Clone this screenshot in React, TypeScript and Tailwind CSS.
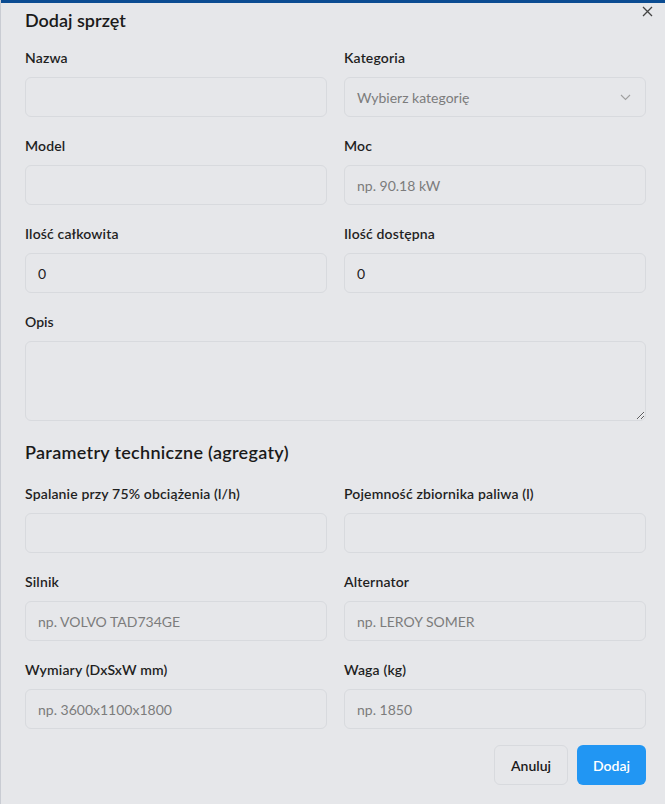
import React from "react";

const font = { fontFamily: 'Lato, "Noto Sans", sans-serif' };

function Field({ label, placeholder, value, select }: { label: string; placeholder?: string; value?: string; select?: boolean }) {
  return (
    <div className="flex flex-col gap-[9px]">
      <label className="text-[14px] leading-[20px] font-semibold text-[#1f1f1f] tracking-[0.15px]">{label}</label>
      <div className="relative h-[40px] rounded-[6px] border border-[#d8dade] bg-[#e6e7ea] flex items-center px-[12px]">
        {value !== undefined ? (
          <span className="text-[14px] text-[#222]">{value}</span>
        ) : placeholder ? (
          <span className="text-[14px] text-[#7c7c7c]">{placeholder}</span>
        ) : null}
        {select && (
          <svg className="absolute right-[14px] top-[16px]" width="11" height="7" viewBox="0 0 11 7" fill="none">
            <path d="M1 1L5.5 5.5L10 1" stroke="#a0a0a0" strokeWidth="1.1" />
          </svg>
        )}
      </div>
    </div>
  );
}

export default function App() {
  return (
    <div style={font} className="w-[665px] h-[804px] bg-[#e6e7ea] border-l border-[#c9ccd3] overflow-hidden flex flex-col relative">
      <div className="h-[3px] bg-[#0b4c92]" />
      <svg className="absolute left-[641px] top-[6px]" width="11" height="11" viewBox="0 0 11 11">
        <path d="M1 1L10 10M10 1L1 10" stroke="#444" strokeWidth="1.3" />
      </svg>
      <div className="pl-[24px] pr-[19px] flex flex-col">
        <h2 className="text-[18px] leading-[28px] font-semibold text-[#1a1a1a] mt-[3px]">Dodaj sprzęt</h2>
        <div className="grid grid-cols-2 gap-x-[17px] gap-y-[19px] mt-[14px]">
          <Field label="Nazwa" />
          <Field label="Kategoria" placeholder="Wybierz kategorię" select />
          <Field label="Model" />
          <Field label="Moc" placeholder="np. 90.18 kW" />
          <Field label="Ilość całkowita" value="0" />
          <Field label="Ilość dostępna" value="0" />
          <div className="col-span-2 flex flex-col gap-[9px]">
            <label className="text-[14px] leading-[20px] font-semibold text-[#1f1f1f]">Opis</label>
            <textarea className="h-[80px] rounded-[6px] border border-[#d8dade] bg-[#e6e7ea] outline-none" />
          </div>
        </div>
        <h3 className="text-[18px] leading-[28px] font-semibold text-[#1a1a1a] mt-[17px] tracking-[0.3px]">Parametry techniczne (agregaty)</h3>
        <div className="grid grid-cols-2 gap-x-[17px] gap-y-[19px] mt-[18px]">
          <Field label="Spalanie przy 75% obciążenia (l/h)" />
          <Field label="Pojemność zbiornika paliwa (l)" />
          <Field label="Silnik" placeholder="np. VOLVO TAD734GE" />
          <Field label="Alternator" placeholder="np. LEROY SOMER" />
          <Field label="Wymiary (DxSxW mm)" placeholder="np. 3600x1100x1800" />
          <Field label="Waga (kg)" placeholder="np. 1850" />
        </div>
        <div className="flex justify-end gap-[9px] mt-[16px]">
          <button className="h-[40px] w-[74px] rounded-[6px] border border-[#d8dade] bg-[#e6e7ea] text-[14px] font-semibold text-[#1a1a1a]">Anuluj</button>
          <button className="h-[40px] w-[69px] rounded-[6px] bg-[#2196f3] text-[14px] font-semibold text-white">Dodaj</button>
        </div>
      </div>
    </div>
  );
}
